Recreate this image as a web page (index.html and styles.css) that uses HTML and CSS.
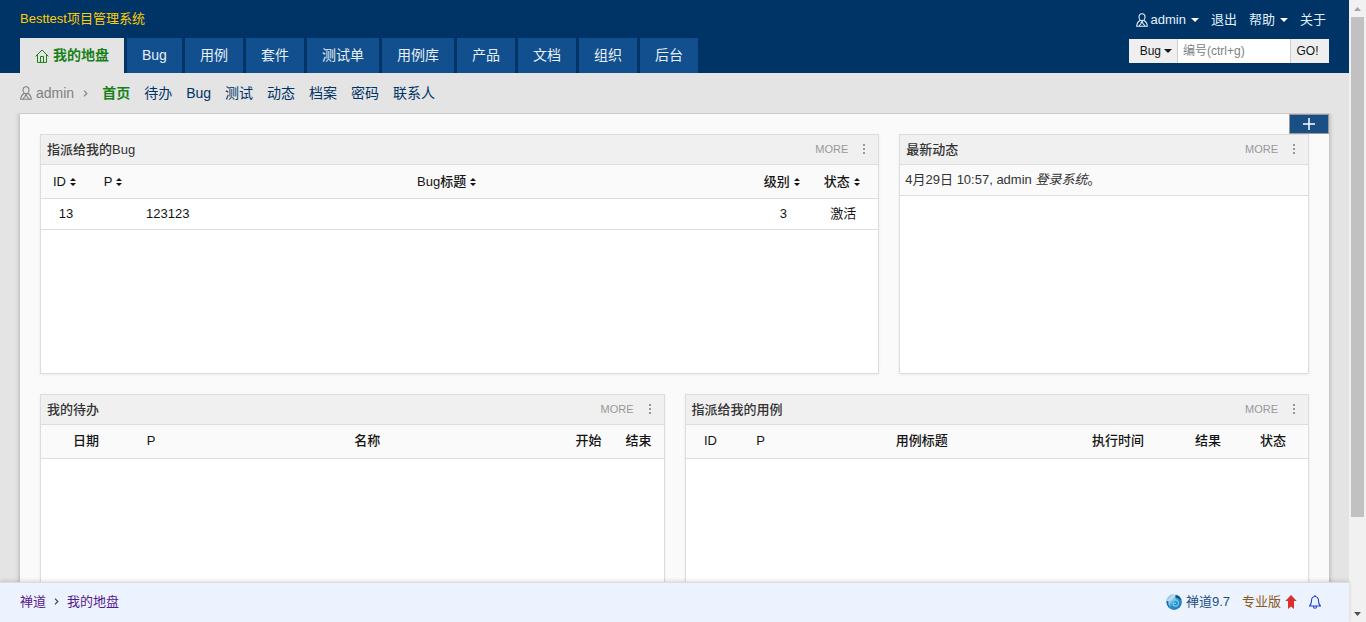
FILE: index.html
```html
<!DOCTYPE html>
<html lang="zh-CN">
<head>
<meta charset="utf-8">
<title>我的地盘</title>
<link rel="stylesheet" href="styles.css">
</head>
<body>
<svg class="sprite" aria-hidden="true">
  <symbol id="i-user" viewBox="0 0 12 14"><path d="M6 .8c1.900 0 3 1.400 3 3.200C9 6 7.700 7.800 6 7.800S3 6 3 4C3 2.200 4.100.8 6 .8zM4 7.500C2.200 8.500.8 10 .7 13.300h10.600C11.200 10 9.800 8.500 8 7.500M3 13l2-2.500L6 8l1 2.500L9 13" fill="none" stroke="currentColor" stroke-width="1.100"/></symbol>
  <symbol id="i-home" viewBox="0 0 14 14"><path d="M.6 7.400 7 1l6.400 6.400M2.500 6v7.400h9V6M5.500 13.400V7.500h3v5.900" fill="none" stroke="currentColor"/></symbol>
  <symbol id="i-sort" viewBox="0 0 6 8"><path d="M3 0 6 3H0zM3 8 0 5h6z" fill="currentColor"/></symbol>
  <symbol id="i-caret" viewBox="0 0 8 4"><path d="M0 0h8L4 4z" fill="currentColor"/></symbol>
  <symbol id="i-angle" viewBox="0 0 5 7"><path d="M1 .7 3.800 3.500 1 6.300" fill="none" stroke="currentColor" stroke-width="1.200"/></symbol>
  <symbol id="i-dots" viewBox="0 0 2 10"><path d="M0 0h2v2H0zM0 4h2v2H0zM0 8h2v2H0z" fill="currentColor"/></symbol>
</svg>
<div class="window">
  <div class="page">
    <header class="header">
      <div class="topbar">
        <div class="brand">Besttest项目管理系统</div>
        <div class="account">
          <a href="#" class="user"><svg class="icon-user"><use href="#i-user"/></svg>admin<svg class="caret"><use href="#i-caret"/></svg></a>
          <a href="#">退出</a>
          <a href="#" class="user">帮助<svg class="caret"><use href="#i-caret"/></svg></a>
          <a href="#">关于</a>
        </div>
      </div>
      <div class="navbar">
        <nav class="tabs">
          <a href="#" class="tab active"><svg class="icon"><use href="#i-home"/></svg>我的地盘</a>
          <a href="#" class="tab">Bug</a>
          <a href="#" class="tab">用例</a>
          <a href="#" class="tab">套件</a>
          <a href="#" class="tab">测试单</a>
          <a href="#" class="tab">用例库</a>
          <a href="#" class="tab">产品</a>
          <a href="#" class="tab">文档</a>
          <a href="#" class="tab">组织</a>
          <a href="#" class="tab">后台</a>
        </nav>
        <form class="search">
          <button type="button" class="search-type">Bug<svg class="caret"><use href="#i-caret"/></svg></button>
          <input type="text" class="search-input" placeholder="编号(ctrl+g)" aria-label="编号">
          <button type="button" class="search-go">GO!</button>
        </form>
      </div>
    </header>
    <nav class="submenu">
      <span class="who"><svg class="icon-user"><use href="#i-user"/></svg>admin<svg class="angle"><use href="#i-angle"/></svg></span>
      <a href="#" class="active">首页</a>
      <a href="#">待办</a>
      <a href="#">Bug</a>
      <a href="#">测试</a>
      <a href="#">动态</a>
      <a href="#">档案</a>
      <a href="#">密码</a>
      <a href="#">联系人</a>
    </nav>
    <div class="viewport">
      <main class="board">
        <button type="button" class="add" aria-label="添加区块"><svg viewBox="0 0 12 12"><path d="M6 0v12M0 6h12" stroke="currentColor" stroke-width="1.500"/></svg></button>
        <section class="panel wide">
          <div class="panel-head"><h2>指派给我的Bug</h2><a href="#" class="more">MORE</a><button type="button" class="menu" aria-label="菜单"><svg><use href="#i-dots"/></svg></button></div>
          <table>
            <colgroup><col class="w50"><col class="w47"><col><col class="w50"><col class="w70"></colgroup>
            <thead><tr>
              <th>ID<svg class="sort"><use href="#i-sort"/></svg></th>
              <th>P<svg class="sort"><use href="#i-sort"/></svg></th>
              <th>Bug标题<svg class="sort"><use href="#i-sort"/></svg></th>
              <th>级别<svg class="sort"><use href="#i-sort"/></svg></th>
              <th>状态<svg class="sort"><use href="#i-sort"/></svg></th>
            </tr></thead>
            <tbody><tr><td>13</td><td></td><td class="title">123123</td><td>3</td><td>激活</td></tr></tbody>
          </table>
        </section>
        <section class="panel narrow">
          <div class="panel-head"><h2>最新动态</h2><a href="#" class="more">MORE</a><button type="button" class="menu" aria-label="菜单"><svg><use href="#i-dots"/></svg></button></div>
          <ul class="activity"><li>4月29日 10:57, admin <em>登录系统</em>。</li></ul>
        </section>
        <section class="panel half">
          <div class="panel-head"><h2>我的待办</h2><a href="#" class="more">MORE</a><button type="button" class="menu" aria-label="菜单"><svg><use href="#i-dots"/></svg></button></div>
          <table>
            <colgroup><col class="w90"><col class="w40"><col><col class="w50"><col class="w50"></colgroup>
            <thead><tr><th>日期</th><th>P</th><th>名称</th><th>开始</th><th>结束</th></tr></thead>
          </table>
        </section>
        <section class="panel half">
          <div class="panel-head"><h2>指派给我的用例</h2><a href="#" class="more">MORE</a><button type="button" class="menu" aria-label="菜单"><svg><use href="#i-dots"/></svg></button></div>
          <table>
            <colgroup><col class="w50"><col class="w50"><col><col class="w120"><col class="w60"><col class="w70"></colgroup>
            <thead><tr><th>ID</th><th>P</th><th>用例标题</th><th>执行时间</th><th>结果</th><th>状态</th></tr></thead>
          </table>
        </section>
      </main>
    </div>
    <footer class="footer">
      <nav class="crumbs"><a href="#">禅道</a><svg class="angle"><use href="#i-angle"/></svg><a href="#">我的地盘</a></nav>
      <div class="powered">
        <a href="#" class="version">
          <svg class="globe" viewBox="0 0 16 16">
            <defs><linearGradient id="g" x1="0" y1="0" x2="1" y2="1"><stop offset="0" stop-color="#4a9fd0"/><stop offset=".3" stop-color="#c4e2f2"/><stop offset=".55" stop-color="#2a93cc"/><stop offset="1" stop-color="#1272b4"/></linearGradient></defs>
            <circle cx="8" cy="8" r="7.900" fill="url(#g)"/>
            <path d="M9.500 10c-.2-1.300-2.200-1.200-2.400.1-.2 2.200 3.200 2.700 4.700 1 1.900-2.400.1-5.300-3.300-5.300-3.400 0-5.500 1.900-6 4.700" fill="none" stroke="#7fd0ee" stroke-width="1.200"/>
            <path d="M9.500 1c3 .4 5.300 2.500 6 5.500-1.500-1.500-3.500-2.500-6-2.800z" fill="#0b4c88"/>
            <path d="M.5 7C.3 10 1.500 12.500 4 14c-1.500-2-2-4.500-1.500-7z" fill="#1567a8"/>
          </svg>禅道9.7</a>
        <a href="#" class="pro">专业版<svg class="up" viewBox="0 0 12 14"><path d="M6 0l5.700 6H9v8L6 11.500 3 14V6H.3z" fill="#d9302c"/></svg></a>
        <a href="#" class="notify" aria-label="通知"><svg class="bell" viewBox="0 0 12 14"><path d="M6 0v1.500M6 1.500c-2.500 0-3.500 2-3.500 4.300C2.500 8.500 2 9.500.6 11h10.800C10 9.500 9.500 8.500 9.500 5.800 9.500 3.500 8.500 1.500 6 1.500zM4.500 11.500c0 2.300 3 2.300 3 0" fill="none" stroke="currentColor" stroke-width="1.100"/></svg></a>
      </div>
    </footer>
  </div>
  <div class="scrollbar" aria-hidden="true">
    <svg class="arrow dim" viewBox="0 0 17 17"><path d="M5 11h7L8.500 7z" fill="currentColor"/></svg>
    <div class="track"><div class="thumb"></div></div>
    <svg class="arrow" viewBox="0 0 17 17"><path d="M5 7h7l-3.500 4z" fill="currentColor"/></svg>
  </div>
</div>
</body>
</html>
```
FILE: styles.css
```css
* { box-sizing: border-box; }
body {
  margin: 0;
  font: 13px/20px "Liberation Sans", "Noto Sans CJK SC", sans-serif;
  color: #141414;
}
a { color: inherit; text-decoration: none; }
button, input { font: inherit; border: 0; border-radius: 0; margin: 0; }
h2, ul { margin: 0; padding: 0; }
svg { display: block; flex: none; }
.sprite { position: absolute; width: 0; height: 0; }
.icon { width: 14px; height: 14px; }
.icon-user { width: 12px; height: 14px; }
.caret { width: 8px; height: 4px; }
.angle { width: 5px; height: 7px; }

.window { display: flex; height: 100vh; overflow: hidden; }
.page { flex: 1; min-width: 0; display: flex; flex-direction: column; background: #e4e4e4; }

.header { background: #036; color: #fff; padding: 0 20px; }
.topbar { display: flex; justify-content: space-between; height: 38px; }
.brand { color: #fc0; line-height: 38px; }
.account { display: flex; gap: 12px; height: 40px; line-height: 40px; padding-right: 3px; color: #e0f2fb; }
.user { display: flex; align-items: center; gap: 3px; }
.user .caret { margin-left: 2px; color: #fff; }

.navbar { display: flex; justify-content: space-between; align-items: flex-start; }
.tabs { display: flex; gap: 3px; font-size: 14px; line-height: 35px; }
.tab { display: flex; align-items: center; gap: 4px; padding: 0 15px; background: #114f8e; color: #e8f0f6; }
.tab.active { background: #e4e4e4; color: #1a801a; font-weight: 700; }
.search { display: flex; height: 24px; width: 200px; margin-top: 1px; }
.search button { background: #efefef; color: #141414; padding: 0; }
.search .search-type { display: flex; align-items: center; justify-content: flex-end; gap: 3px; width: 48px; padding-right: 5px; font-size: 12px; }
.search .search-go { width: 39px; padding-right: 5px; font-size: 12px; border-left: 1px solid #ccc; }
.search-input { flex: 1; min-width: 0; padding: 0 5px; font-size: 12px; background: #fff; border-left: 1px solid #ccc; }
.search-input::placeholder { color: #808080; }

.submenu { display: flex; gap: 14px; height: 40px; padding: 0 20px; line-height: 40px; font-size: 14px; color: #036; }
.submenu .active { color: #1a801a; font-weight: 700; }
.who { display: flex; align-items: center; gap: 4px; color: #808080; }
.who .angle { margin-left: 5px; }

.viewport { flex: 1; min-height: 0; padding: 0 20px; overflow: hidden; }
.board {
  position: relative;
  display: grid;
  grid-template-columns: repeat(12, 1fr);
  grid-auto-rows: 240px;
  gap: 20px;
  padding: 20px;
  background: #fafafa;
  border-top: 1px solid #ccc;
  box-shadow: 0 0 5px rgba(0, 0, 0, .3);
}
.add {
  position: absolute;
  top: 0;
  right: 0;
  display: flex;
  align-items: center;
  justify-content: center;
  width: 40px;
  height: 20px;
  padding: 0;
  color: #fff;
  background: #1a4f85;
  border: 1px solid #999;
}
.add svg { width: 12px; height: 12px; }

.panel { background: #fff; border: 1px solid #ddd; box-shadow: 0 1px 3px rgba(0, 0, 0, .06); }
.wide { grid-column: span 8; }
.narrow { grid-column: span 4; }
.half { grid-column: span 6; }
.panel-head { display: flex; align-items: center; height: 30px; padding: 0 3px 0 6px; background: #f0f0f0; border-bottom: 1px solid #ddd; }
.panel-head h2 { flex: 1; font-size: 13px; font-weight: 500; color: #333; }
.more { font-size: 11px; line-height: 18px; padding-bottom: 2px; color: #999; }
.menu { display: flex; justify-content: center; width: 22px; margin-left: 5px; padding: 0 0 2px; background: none; color: #999; }
.menu svg { width: 2px; height: 10px; }

table { width: 100%; table-layout: fixed; border-collapse: separate; border-spacing: 0; }
th, td { padding: 0; text-align: center; font-weight: 400; border-bottom: 1px solid #ddd; }
th { height: 34px; font-weight: 500; background: #fafafa; }
td { height: 31px; }
.half th { padding-bottom: 2px; }
.title { text-align: left; padding-left: 8px; }
.sort { display: inline-block; width: 6px; height: 8px; margin: 0 3px 0 4px; }
.w40 { width: 40px; }
.w47 { width: 47px; }
.w50 { width: 50px; }
.w60 { width: 60px; }
.w70 { width: 70px; }
.w90 { width: 90px; }
.w120 { width: 120px; }
.activity { list-style: none; }
.activity li { padding: 5px; height: 31px; background: #fafafa; border-bottom: 1px solid #ddd; color: #333; }

.footer {
  position: relative;
  display: flex;
  align-items: center;
  justify-content: space-between;
  height: 40px;
  padding: 0 28px 2px 20px;
  background: #edf3fe;
  border-top: 1px solid #ddd;
  box-shadow: 0 -1px 4px rgba(0, 0, 0, .15);
}
.crumbs { display: flex; align-items: center; gap: 8px; color: #551a8b; }
.crumbs .angle { color: #444; }
.powered { display: flex; align-items: center; gap: 12px; }
.version, .pro { display: flex; align-items: center; gap: 4px; }
.version { color: #1a4f85; }
.pro { color: #8a5a1c; }
.notify { color: #1a3fd0; }
.globe { width: 16px; height: 16px; }
.up, .bell { width: 12px; height: 14px; }

.scrollbar { display: flex; flex-direction: column; width: 17px; background: #f1f1f1; color: #505050; }
.arrow { width: 17px; height: 17px; }
.arrow.dim { color: #a3a3a3; }
.track { flex: 1; padding: 0 2px; }
.thumb { height: 85%; background: #c1c1c1; }
```
